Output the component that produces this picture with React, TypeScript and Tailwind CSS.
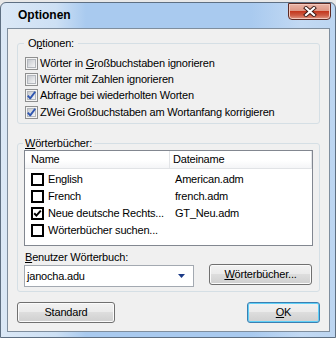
import React from "react";

const ui =
  "font-['Liberation_Sans',Arial,sans-serif] text-[11px] leading-[13px] tracking-[-0.2px] text-black";

type CheckProps = { checked?: boolean };

// vista style checkbox (options group)
const VistaCheck = ({ checked }: CheckProps) => (
  <svg width="13" height="13" viewBox="0 0 13 13" className="shrink-0">
    <defs>
      <linearGradient id="vbFill" x1="0" y1="0" x2="1" y2="1">
        <stop offset="0" stopColor={checked ? "#e3e6ea" : "#c2c6cc"} />
        <stop offset="1" stopColor="#f8f8f8" />
      </linearGradient>
    </defs>
    <rect x="0.5" y="0.5" width="12" height="12" fill="#f4f4f4" stroke="#8e8f8f" />
    <rect x="2.5" y="2.5" width="8" height="8" fill="url(#vbFill)" stroke="#b3b7bd" />
    {checked && (
      <path
        d="M2.8 6.6 L5.2 9.4 L10.2 2.8"
        fill="none"
        stroke="#2f56b0"
        strokeWidth="1.9"
        strokeLinejoin="round"
      />
    )}
  </svg>
);

// flat listview checkbox
const ListCheck = ({ checked }: CheckProps) => (
  <svg width="13" height="13" viewBox="0 0 13 13" className="shrink-0">
    <rect x="1" y="1" width="11" height="11" fill="#ffffff" stroke="#000000" strokeWidth="2" />
    {checked && (
      <path d="M3.2 6.2 L5.4 8.6 L9.8 3.6" fill="none" stroke="#000000" strokeWidth="2" />
    )}
  </svg>
);

type BtnProps = { children: React.ReactNode; className?: string; isDefault?: boolean };

const Btn = ({ children, className, isDefault }: BtnProps) => (
  <div
    className={`h-[21px] rounded-[3px] border flex items-center justify-center bg-[linear-gradient(#f2f2f2_0%,#ebebeb_45%,#dddddd_50%,#cfcfcf_100%)] ${
      isDefault
        ? "border-[#3c7fb1] shadow-[inset_0_0_0_1px_#5fd0f8]"
        : "border-[#707070] shadow-[inset_0_0_0_1px_#fbfbfb]"
    } ${className ?? ""}`}
  >
    {children}
  </div>
);

const options = [
  { label: <>Wörter in <u>G</u>roßbuchstaben ignorieren</>, checked: false },
  { label: <>Wörter mit Zahlen ignorieren</>, checked: false },
  { label: <>Abfrage bei wiederholten Worten</>, checked: true },
  { label: <>ZWei Großbuchstaben am Wortanfang korrigieren</>, checked: true },
];

const dictionaries = [
  { name: "English", file: "American.adm", checked: false },
  { name: "French", file: "french.adm", checked: false },
  { name: "Neue deutsche Rechts...", file: "GT_Neu.adm", checked: true },
  { name: "Wörterbücher suchen...", file: "", checked: false },
];

const App = () => {
  return (
    <div className={`w-[336px] h-[338px] bg-[#e8e8e8] pt-[2px] ${ui}`}>
      <div className="h-[336px] border border-[#5e6f82] rounded-t-[6px] bg-[linear-gradient(90deg,#dbe8f6_0px,#cde0f4_55px,#a9caef_85px,#a9caef_250px,#c2d9f3_300px,#bcd5f1_336px)] flex flex-col">
        {/* TITLE BAR */}
        <div className="h-[25px] flex justify-between pl-[17px] pr-[4px]">
          <span className="self-center font-bold text-[12px] tracking-[0px]">Optionen</span>
          <div className="w-[43px] h-[17px] rounded-b-[4px] border border-[#5d2a24] bg-[linear-gradient(#eab4a6_0%,#de9886_45%,#c4381f_50%,#cc5a43_75%,#e29a86_100%)] shadow-[inset_0_0_0_1px_#f3c7bb] flex items-center justify-center">
            <svg width="14" height="11" viewBox="0 0 14 11">
              <path d="M3 2 L11 9 M11 2 L3 9" stroke="#3b1a16" strokeWidth="4" strokeLinecap="square" />
              <path d="M3 2 L11 9 M11 2 L3 9" stroke="#ffffff" strokeWidth="2.2" strokeLinecap="square" />
            </svg>
          </div>
        </div>

        {/* CLIENT */}
        <div className="ml-[6px] w-[323px] h-[304px] border border-[#7f8e9e] bg-[#f0f0f0] px-[9px] pt-[8px]">
          {/* OPTIONS GROUP */}
          <fieldset className="h-[87px] border border-[#d5dfe5] rounded-[3px] pl-[7px] pr-[6px]">
            <legend className="-ml-[1px] px-[4px]">
              O<u>p</u>tionen:
            </legend>
            <div className="pt-[5px] flex flex-col">
              {options.map((o, i) => (
                <div key={i} className="h-[16.33px] flex items-center">
                  <VistaCheck checked={o.checked} />
                  <span className="ml-[2px] whitespace-nowrap">{o.label}</span>
                </div>
              ))}
            </div>
          </fieldset>

          {/* DICTIONARIES GROUP */}
          <fieldset className="mt-[13px] h-[155px] border border-[#d5dfe5] rounded-[3px] px-[6px]">
            <legend className="-ml-[1px] px-[2px]">
              <u>W</u>örterbücher:
            </legend>
            <div className="h-[96px] border border-[#828790] bg-white">
              <div className="h-[18px] grid grid-cols-[144px_1fr] bg-[linear-gradient(#ffffff_0%,#ffffff_55%,#f4f5f7_100%)] border-b border-[#e1e3e6]">
                <div className="pl-[6px] flex items-center">Name</div>
                <div className="pl-[3px] flex items-center border-l border-[#e3e5e8] border-r">Dateiname</div>
              </div>
              <div className="pt-[2px]">
                {dictionaries.map((d) => (
                  <div key={d.name} className="h-[17px] grid grid-cols-[145px_1fr] items-center">
                    <div className="pl-[6px] flex items-center">
                      <ListCheck checked={d.checked} />
                      <span className="ml-[4px] whitespace-nowrap">{d.name}</span>
                    </div>
                    <div className="pl-[5px] whitespace-nowrap">{d.file}</div>
                  </div>
                ))}
              </div>
            </div>

            <div className="mt-[5px] pl-[1px]">
              <u>B</u>enutzer Wörterbuch:
            </div>
            <div className="mt-[1px] flex items-start">
              <div className="w-[170px] h-[22px] border border-[#a3a9b1] bg-white flex items-center justify-between pl-[2px] pr-[8px]">
                <span>janocha.adu</span>
                <svg width="7" height="4" viewBox="0 0 7 4">
                  <path d="M0 0 H7 L3.5 4 Z" fill="#1b3a87" />
                </svg>
              </div>
              <Btn className="ml-[15px] -mt-[1px] w-[103px]">
                <span>
                  <u>W</u>örterbücher...
                </span>
              </Btn>
            </div>
          </fieldset>

          {/* BOTTOM BUTTONS */}
          <div className="mt-[10px] flex justify-between">
            <Btn className="w-[98px]">Standard</Btn>
            <Btn className="w-[73px]" isDefault>
              <span>
                <u>O</u>K
              </span>
            </Btn>
          </div>
        </div>
      </div>
    </div>
  );
};

export default App;
